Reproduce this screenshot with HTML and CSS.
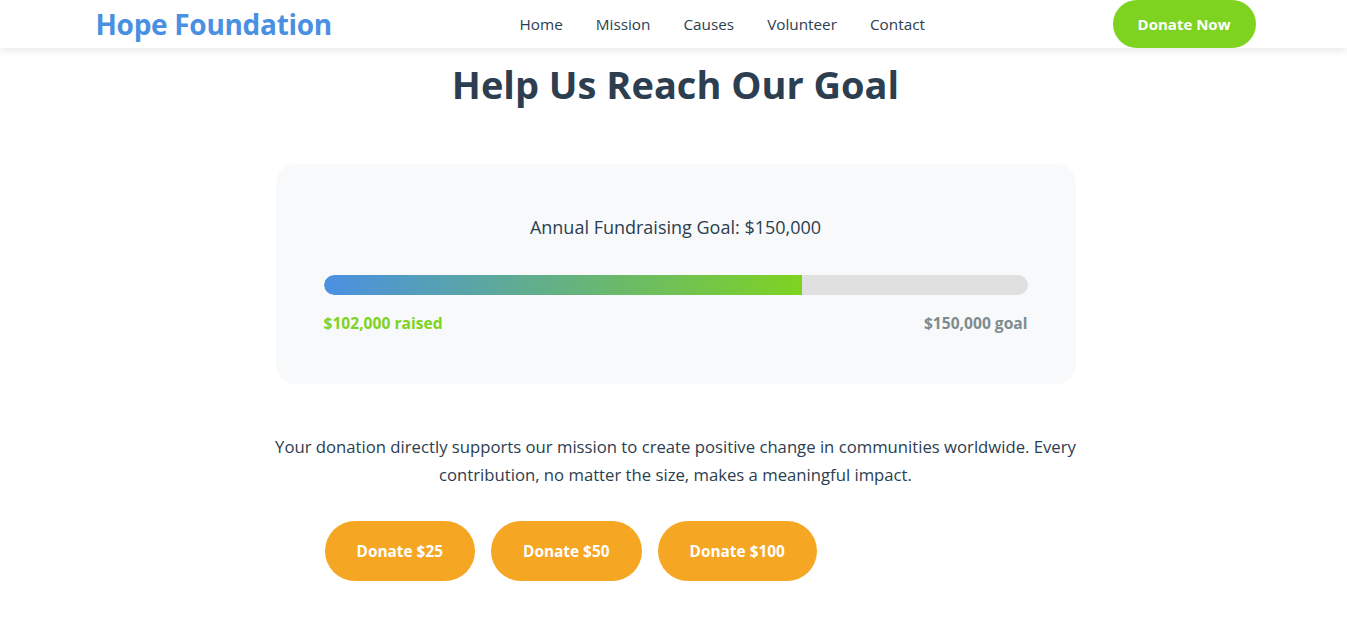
FILE: index.html
```html
<!DOCTYPE html>
<html lang="en">
<head>
<meta charset="utf-8">
<title>Hope Foundation</title>
<link rel="stylesheet" href="styles.css">
</head>
<body>
<header class="navbar">
  <div class="nav-inner">
    <a class="brand" href="#">Hope Foundation</a>
    <nav class="nav-links">
      <a href="#">Home</a>
      <a href="#">Mission</a>
      <a href="#">Causes</a>
      <a href="#">Volunteer</a>
      <a href="#">Contact</a>
    </nav>
    <a class="btn-donate-now" href="#">Donate Now</a>
  </div>
</header>
<main class="goal-section">
  <h1 class="goal-title">Help Us Reach Our Goal</h1>
  <div class="goal-card">
    <p class="goal-label">Annual Fundraising Goal: $150,000</p>
    <div class="progress-track">
      <div class="progress-fill" style="width: 68%"></div>
    </div>
    <div class="progress-stats">
      <span class="raised">$102,000 raised</span>
      <span class="goal">$150,000 goal</span>
    </div>
  </div>
  <p class="goal-text">Your donation directly supports our mission to create positive change in communities worldwide. Every contribution, no matter the size, makes a meaningful impact.</p>
  <div class="amount-buttons">
    <a class="btn-amount" href="#">Donate $25</a>
    <a class="btn-amount" href="#">Donate $50</a>
    <a class="btn-amount" href="#">Donate $100</a>
  </div>
</main>
</body>
</html>
```
FILE: styles.css
```css
* { box-sizing: border-box; }
body {
  margin: 0;
  font-family: "Open Sans", "Noto Sans", sans-serif;
  color: #2c3e50;
  background: #ffffff;
}
a { text-decoration: none; }
.navbar {
  background: #ffffff;
  box-shadow: 0 2px 8px rgba(0, 0, 0, 0.1);
  height: 48px;
}
.nav-inner {
  max-width: 1200px;
  margin: 0 auto;
  padding: 0 18px 0 22px;
  height: 48px;
  display: flex;
  align-items: center;
  justify-content: space-between;
}
.brand {
  color: #4a90e2;
  font-weight: 700;
  font-size: 28px;
  letter-spacing: -0.3px;
}
.nav-links {
  display: flex;
  gap: 33px;
}
.nav-links a {
  color: #2c3e50;
  font-size: 15.3px;
  font-weight: 500;
}
.btn-donate-now {
  background: #7ed321;
  color: #ffffff;
  font-weight: 700;
  font-size: 15px;
  height: 48px;
  padding: 0 25px;
  border-radius: 24px;
  display: flex;
  align-items: center;
}
.goal-section {
  display: flex;
  flex-direction: column;
  align-items: center;
  padding: 10px 0 0 4px;
}
.goal-title {
  margin: 0 0 53px;
  font-size: 38px;
  font-weight: 700;
  line-height: 53px;
}
.goal-card {
  width: 800px;
  background: #f8f9fa;
  border-radius: 20px;
  padding: 48px;
}
.goal-label {
  margin: 0 0 33px;
  text-align: center;
  font-size: 18px;
  line-height: 30px;
}
.progress-track {
  height: 20px;
  border-radius: 10px;
  background: #e0e0e0;
  overflow: hidden;
}
.progress-fill {
  height: 100%;
  background: linear-gradient(90deg, #4a90e2, #7ed321);
  border-radius: 10px 0 0 10px;
}
.progress-stats {
  display: flex;
  justify-content: space-between;
  margin-top: 16px;
  font-weight: 700;
  font-size: 15.6px;
  line-height: 25px;
}
.raised { color: #7ed321; }
.goal { color: #7f8c8d; }
.goal-text {
  width: 812px;
  margin: 49px 0 32px;
  text-align: center;
  font-size: 16.7px;
  line-height: 28px;
}
.amount-buttons {
  width: 800px;
  padding-left: 49px;
  display: flex;
  gap: 16px;
}
.btn-amount {
  background: #f5a623;
  color: #ffffff;
  font-weight: 700;
  font-size: 15.4px;
  height: 60px;
  padding: 0 32px;
  border-radius: 30px;
  display: flex;
  align-items: center;
}
```
